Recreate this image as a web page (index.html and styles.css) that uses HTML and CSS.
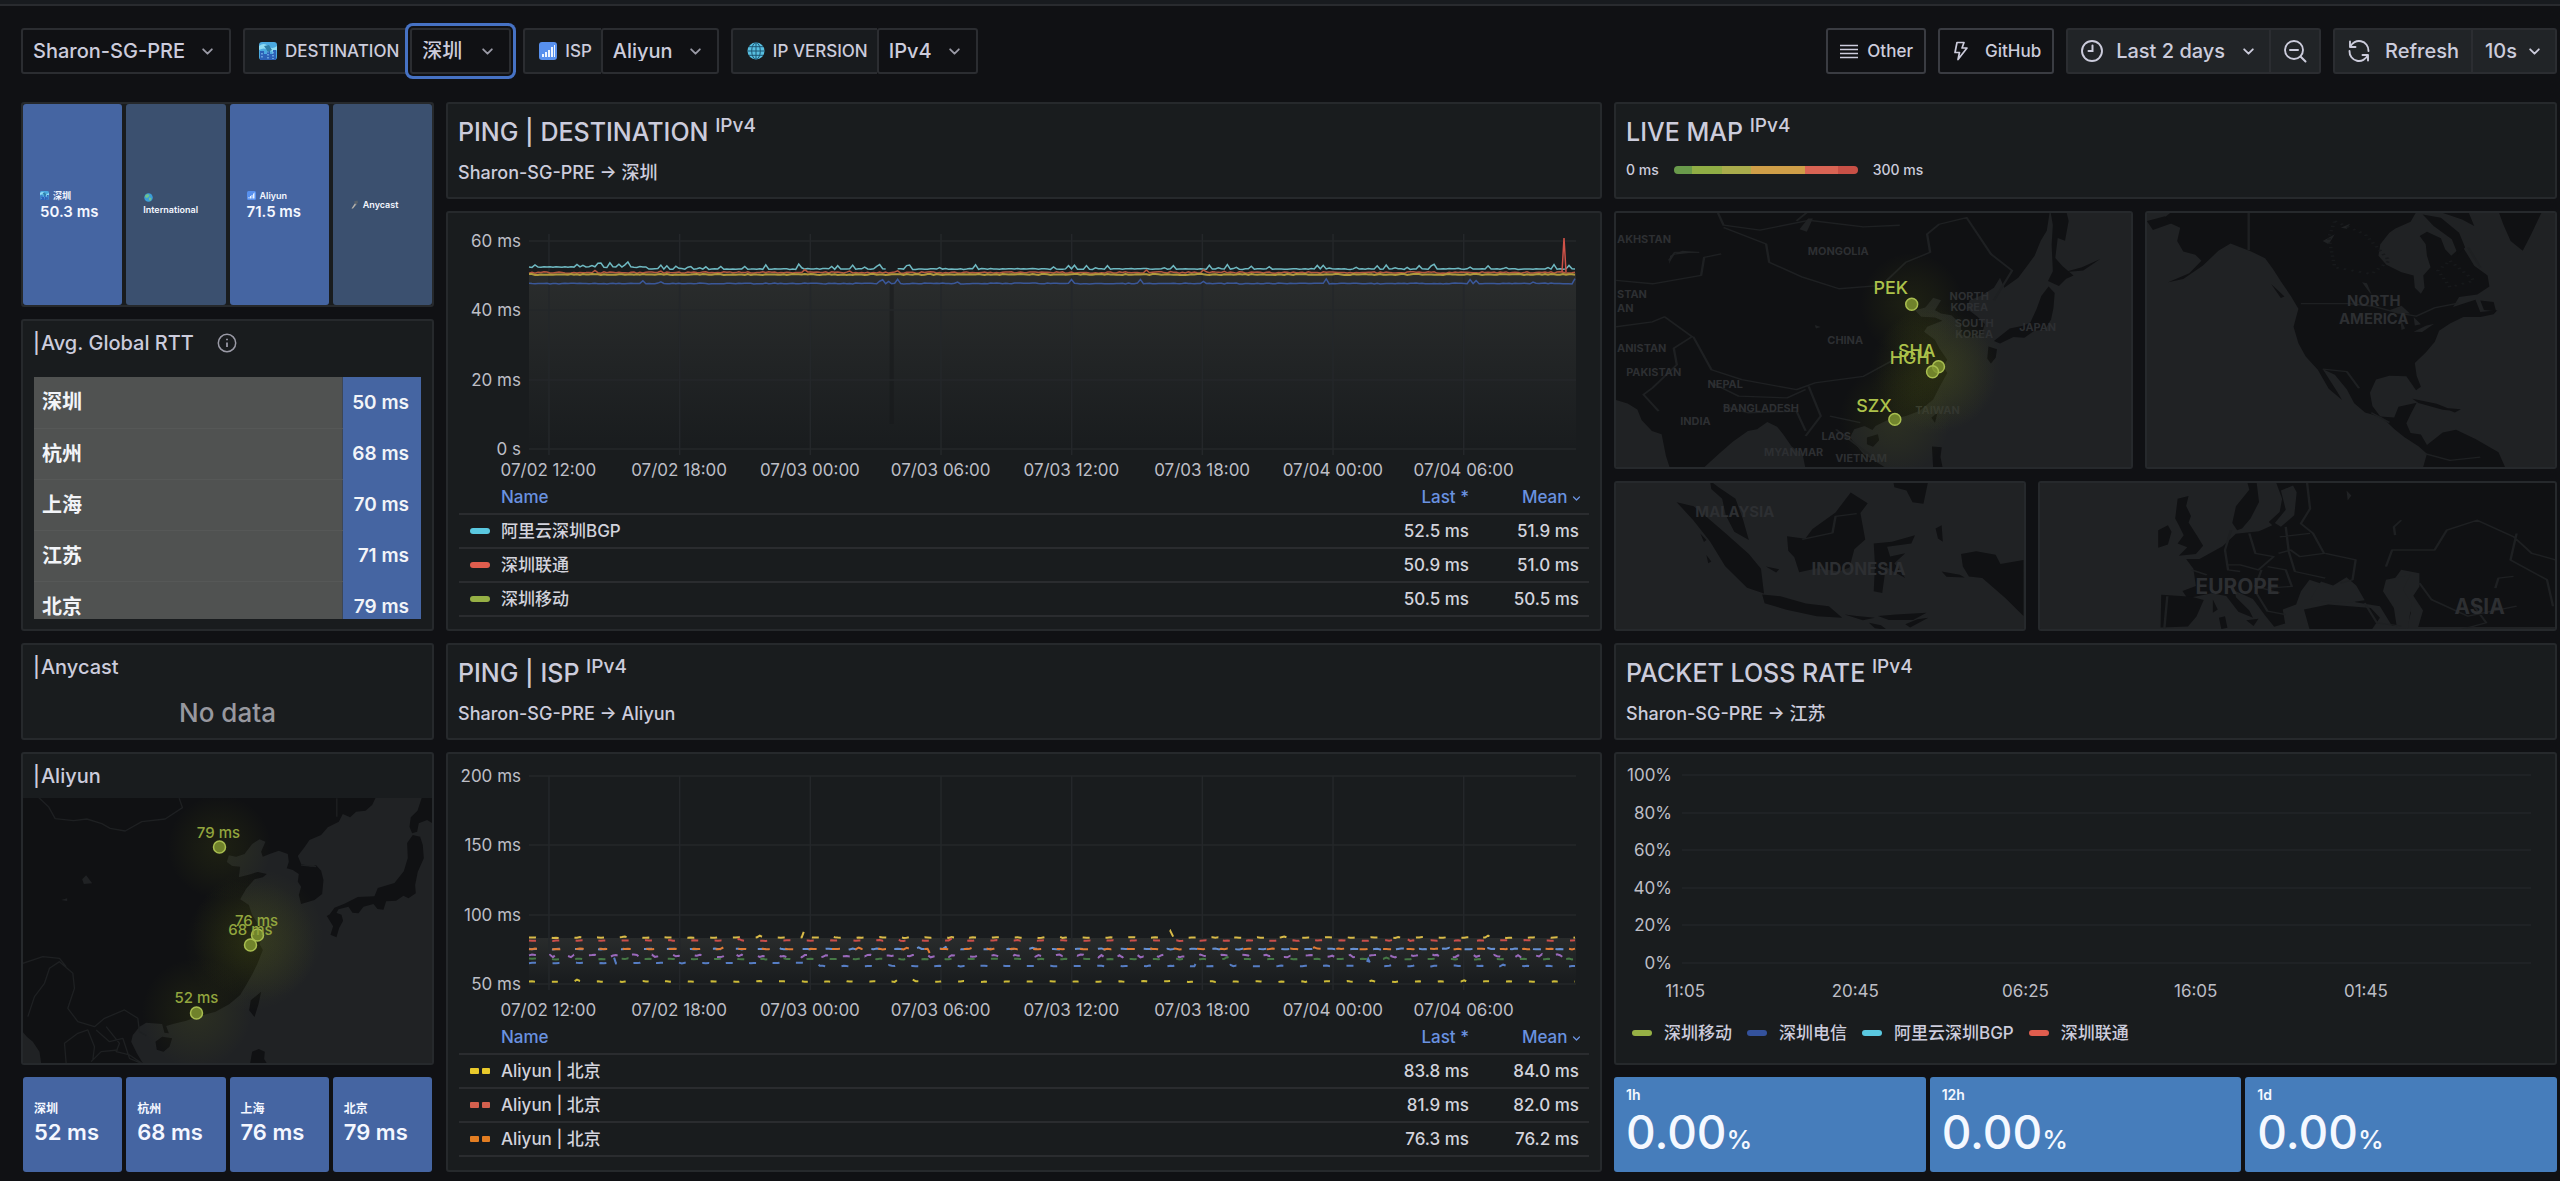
FILE: index.html
```html
<!DOCTYPE html>
<html lang="zh-CN">
<head>
<meta charset="utf-8">
<meta name="viewport" content="width=device-width, initial-scale=1">
<title>Network Latency Dashboard</title>
<link rel="stylesheet" href="styles.css">
</head>
<body>
<svg class="defs" aria-hidden="true">
  <symbol id="chevron" viewBox="0 0 12 12"><path d="M2 4l4 4 4-4" fill="none" stroke="currentColor" stroke-width="1.7" stroke-linecap="round" stroke-linejoin="round"/></symbol>
  <symbol id="bars" viewBox="0 0 18 18"><rect width="18" height="18" rx="3" fill="#5790ee"/><path d="M3 12h2v3H3zM6 10h2v5H6zM9 8h2v7H9zM12 5h2v10h-2zM15 3h1v12h-1z" fill="#eaf3ff"/></symbol>
  <symbol id="city" viewBox="0 0 18 18"><rect width="18" height="18" rx="3" fill="#4aa9e0"/><path d="M0 4q5-4 9 0t9 0v4q-5 3-9 0T0 8z" fill="#8fdcf4"/><path d="M1 18V9h4v3h3V7h3v5h3V8h3v10z" fill="#2c62b8"/><path d="M3 11v6M9 9v8M14 10v7" stroke="#8cc7f5" stroke-width="1.200" stroke-dasharray="1.500 1.500"/><path d="M5 4l5-1 3 5-4 2z" fill="#2f7fa8"/></symbol>
  <symbol id="globe" viewBox="0 0 18 18"><circle cx="9" cy="9" r="8.500" fill="#58bfe0"/><path d="M9 .5v17M.5 9h17M2 4.700h14M2 13.300h14" stroke="#1d5674" fill="none"/><ellipse cx="9" cy="9" rx="4.300" ry="8.300" fill="none" stroke="#1d5674"/></symbol>
  <symbol id="earth" viewBox="0 0 18 18"><circle cx="9" cy="9" r="8.500" fill="#3c9ed8"/><path d="M3 4l5-2 3 3-3 4-4 1-2-3zM10 9l5 1-2 6-3-2z" fill="#6fc38c"/></symbol>
  <symbol id="satellite" viewBox="0 0 18 18"><path d="M3 17L11 5l3 2L6 17z" fill="#b9b4ac"/><path d="M8 3l7-2 1 4-4 5z" fill="#58616b"/></symbol>
</svg>

<div class="topbar"></div>

<header class="toolbar">
  <div class="filters">
    <div class="field">
      <span class="pick pick-node"><select aria-label="Node"><option>Sharon-SG-PRE</option></select><svg class="chev"><use href="#chevron"/></svg></span>
    </div>
    <div class="field field-dest">
      <label for="dest"><svg class="emoji"><use href="#city"/></svg>DESTINATION</label>
      <span class="pick pick-focus"><select id="dest"><option>深圳</option></select><svg class="chev"><use href="#chevron"/></svg></span>
    </div>
    <div class="field">
      <label for="isp"><svg class="emoji"><use href="#bars"/></svg>ISP</label>
      <span class="pick"><select id="isp"><option>Aliyun</option></select><svg class="chev"><use href="#chevron"/></svg></span>
    </div>
    <div class="field">
      <label for="ipv"><svg class="emoji"><use href="#globe"/></svg>IP VERSION</label>
      <span class="pick"><select id="ipv"><option>IPv4</option></select><svg class="chev"><use href="#chevron"/></svg></span>
    </div>
  </div>
  <div class="actions">
    <button class="btn outline" type="button"><svg class="icon" viewBox="0 0 20 20"><path d="M1 4.500h18M1 8.500h18M1 12.500h18M1 16.500h18" stroke="currentColor" stroke-width="1.500"/></svg>Other</button>
    <button class="btn outline wide" type="button"><svg class="icon" viewBox="0 0 20 20"><path d="M6 1.500h7l-2 5.500h5L7 18.500l1.500-7H4z" fill="none" stroke="currentColor" stroke-width="1.700" stroke-linejoin="round"/></svg>GitHub</button>
    <div class="group">
      <button class="btn range" type="button"><svg class="icon big" viewBox="0 0 24 24"><circle cx="12" cy="12" r="10" fill="none" stroke="currentColor" stroke-width="1.900"/><path d="M12.500 6.500V12H8.500" fill="none" stroke="currentColor" stroke-width="2" stroke-linecap="round"/></svg>Last 2 days<svg class="small"><use href="#chevron"/></svg></button>
      <button class="btn zoom" type="button" aria-label="Zoom out"><svg class="icon big" viewBox="0 0 24 24"><circle cx="11" cy="11" r="9" fill="none" stroke="currentColor" stroke-width="1.900"/><path d="M7 11h8M17.500 17.500L22.500 22.500" fill="none" stroke="currentColor" stroke-width="2" stroke-linecap="round"/></svg></button>
    </div>
    <div class="group">
      <button class="btn refresh" type="button"><svg class="icon big" viewBox="0 0 24 24"><path d="M3 2.500v5.500h5.500M3.200 8A9.500 9.500 0 0 1 21.500 12M21 21.500V16h-5.500M20.800 16A9.500 9.500 0 0 1 2.500 12" fill="none" stroke="currentColor" stroke-width="1.900" stroke-linecap="round" stroke-linejoin="round"/></svg>Refresh</button>
      <button class="btn interval" type="button">10s<svg class="small"><use href="#chevron"/></svg></button>
    </div>
  </div>
</header>

<main class="board">
  <section class="col col-left">
    <div class="panel tiles">
      <div class="tile mini blue"><div><p class="cap"><svg><use href="#city"/></svg>深圳</p><p class="num">50.3 ms</p></div></div>
      <div class="tile mini slate"><div><p class="cap stack"><svg><use href="#earth"/></svg>International</p></div></div>
      <div class="tile mini blue"><div><p class="cap"><svg><use href="#bars"/></svg>Aliyun</p><p class="num">71.5 ms</p></div></div>
      <div class="tile mini slate"><div><p class="cap"><svg><use href="#satellite"/></svg>Anycast</p></div></div>
    </div>

    <div class="panel rtt">
      <h2><span>|</span> Avg. Global RTT <svg class="info" viewBox="0 0 20 20"><circle cx="10" cy="10" r="8.700" fill="none" stroke="currentColor" stroke-width="1.500"/><path d="M10 9.500v4.500M10 5.800v1.400" stroke="currentColor" stroke-width="1.800"/></svg></h2>
      <div class="clip">
        <table>
          <tbody>
            <tr><th scope="row">深圳</th><td>50 ms</td></tr>
            <tr><th scope="row">杭州</th><td>68 ms</td></tr>
            <tr><th scope="row">上海</th><td>70 ms</td></tr>
            <tr><th scope="row">江苏</th><td>71 ms</td></tr>
            <tr><th scope="row">北京</th><td>79 ms</td></tr>
          </tbody>
        </table>
      </div>
    </div>

    <div class="panel anycast">
      <h2><span>|</span> Anycast</h2>
      <p class="nodata">No data</p>
    </div>

    <div class="panel mapcard">
      <h2><span>|</span> Aliyun</h2>
      <svg class="map" viewBox="0 0 410 265" preserveAspectRatio="xMidYMid slice">
        <defs><radialGradient id="glow"><stop offset="0" stop-color="#8a9a10" stop-opacity=".11"/><stop offset=".5" stop-color="#8a9a10" stop-opacity=".06"/><stop offset="1" stop-color="#8a9a10" stop-opacity="0"/></radialGradient></defs>
        <g transform="translate(-23 -58) scale(.3333)">
          <path class="land" d="M60 170H1130L1118 195 1098 212 1070 215 1052 232 1030 222 1018 245 985 262 965 285 930 300 915 322 895 348 905 372 935 380 950 376 965 392 972 420 968 462 945 480 905 492 898 465 905 440 895 425 898 402 880 390 862 385 868 365 865 342 838 332 810 342 790 350 785 335 798 305 780 298 758 312 735 342 710 350 688 346 682 366 698 378 722 380 718 412 748 404 775 396 802 402 790 412 765 418 740 446 722 478 748 495 758 525 782 560 790 590 780 612 790 630 775 668 760 700 740 735 722 765 690 792 648 815 600 828 560 842 520 852 500 858 508 880 495 878 488 852 460 850 440 848 420 860 400 885 395 905 412 940 430 970H125L120 935 100 905 82 890 60 865z"/>
          <path class="land" d="M1268 170h40v85l-25-15-25 10-5 25-15 5-8-20 4-28 20-20zM1240 285l22 5 8 25 3 40-18 40-8 40 2 25-22 15-15-8-22 15-30 2-8 25-18-2-12-15-30 8-15 20-18-2-12-18-30 8-12 22-18-2 18-25 30-12 40-20 50-2 10-25 50-15 28-35 12-40-2-45zM982 528l22-12 22 8 5 18-12 22-8 28-18-8 8-25zM785 755l-8 38-12 38-16-20 5-30zM468 905l20-15 30 5-8 25-18 15-20-6zM758 935l20-8 18 8-2 22 8 13h-50z"/>
          <path class="lake" d="M248 418l12-12 18 24-25 2zM185 480l18-5v8z"/>
          <path class="edge" d="M115 170l32 30 20 36 55 6 40-5 45 14 25 14 45 8 50-28 70-8 52-34-10-28M1012 175v55M905 375l45 5M85 830l20-60 30-40 15-45 30-20 40 35 5 45-20 60 30 40 50 15 30-25 60-25 40 25 5 40 20 12M200 970l-5-60 40-30 30-10 20 50-5 40M290 870l40 35 40-10 20 60 35 15M70 670l60-20 50 5 20 25M320 860l40 50-10 25 40 10 45 30M275 965l30-30 50-5M260 980"/>
        </g>
        <circle cx="197" cy="49" r="52" fill="url(#glow)"/><circle cx="235" cy="137" r="66" fill="url(#glow)"/><circle cx="228" cy="147" r="66" fill="url(#glow)"/><circle cx="174" cy="215" r="55" fill="url(#glow)"/>
        <g class="pins"><circle cx="197" cy="49" r="6"/><circle cx="235" cy="137" r="6"/><circle cx="228" cy="147" r="6"/><circle cx="174" cy="215" r="6"/></g>
        <g class="pintext small"><text x="196" y="40">79 ms</text><text x="234" y="128">76 ms</text><text x="228" y="137">68 ms</text><text x="174" y="205">52 ms</text></g>
      </svg>
    </div>

    <div class="tiles foot">
      <div class="tile city blue"><p class="cap">深圳</p><p class="num">52 ms</p></div>
      <div class="tile city blue"><p class="cap">杭州</p><p class="num">68 ms</p></div>
      <div class="tile city blue"><p class="cap">上海</p><p class="num">76 ms</p></div>
      <div class="tile city blue"><p class="cap">北京</p><p class="num">79 ms</p></div>
    </div>
  </section>

  <section class="col col-mid">
    <div class="panel head"><h1>PING | DESTINATION <sup>IPv4</sup></h1><p>Sharon-SG-PRE → 深圳</p></div>

    <div class="panel chart">
      <div class="plot tall">
        <div class="yaxis"><span>60 ms</span><span>40 ms</span><span>20 ms</span><span>0 s</span></div>
        <svg id="chart-dest" viewBox="0 0 1048 228" preserveAspectRatio="none"></svg>
      </div>
      <div class="xaxis"><span>07/02 12:00</span><span>07/02 18:00</span><span>07/03 00:00</span><span>07/03 06:00</span><span>07/03 12:00</span><span>07/03 18:00</span><span>07/04 00:00</span><span>07/04 06:00</span></div>
      <table class="legend">
        <thead><tr><th class="key"></th><th>Name</th><th class="val">Last *</th><th class="val last">Mean <svg><use href="#chevron"/></svg></th></tr></thead>
        <tbody>
          <tr><td class="key"><i class="chip cyan"></i></td><td>阿里云深圳BGP</td><td class="val">52.5 ms</td><td class="val last">51.9 ms</td></tr>
          <tr><td class="key"><i class="chip red"></i></td><td>深圳联通</td><td class="val">50.9 ms</td><td class="val last">51.0 ms</td></tr>
          <tr><td class="key"><i class="chip green"></i></td><td>深圳移动</td><td class="val">50.5 ms</td><td class="val last">50.5 ms</td></tr>
        </tbody>
      </table>
    </div>

    <div class="panel head"><h1>PING | ISP <sup>IPv4</sup></h1><p>Sharon-SG-PRE → Aliyun</p></div>

    <div class="panel chart">
      <div class="plot short">
        <div class="yaxis"><span>200 ms</span><span>150 ms</span><span>100 ms</span><span>50 ms</span></div>
        <svg id="chart-isp" viewBox="0 0 1048 228" preserveAspectRatio="none"></svg>
      </div>
      <div class="xaxis"><span>07/02 12:00</span><span>07/02 18:00</span><span>07/03 00:00</span><span>07/03 06:00</span><span>07/03 12:00</span><span>07/03 18:00</span><span>07/04 00:00</span><span>07/04 06:00</span></div>
      <table class="legend">
        <thead><tr><th class="key"></th><th>Name</th><th class="val">Last *</th><th class="val last">Mean <svg><use href="#chevron"/></svg></th></tr></thead>
        <tbody>
          <tr><td class="key"><i class="dash yellow"></i></td><td>Aliyun | 北京</td><td class="val">83.8 ms</td><td class="val last">84.0 ms</td></tr>
          <tr><td class="key"><i class="dash coral"></i></td><td>Aliyun | 北京</td><td class="val">81.9 ms</td><td class="val last">82.0 ms</td></tr>
          <tr><td class="key"><i class="dash orange"></i></td><td>Aliyun | 北京</td><td class="val">76.3 ms</td><td class="val last">76.2 ms</td></tr>
        </tbody>
      </table>
    </div>
  </section>

  <section class="col col-right">
    <div class="panel head">
      <h1>LIVE MAP <sup>IPv4</sup></h1>
      <div class="scale"><span>0 ms</span><i></i><span>300 ms</span></div>
    </div>

    <div class="maps maps-top">
      <div class="panel">
        <svg class="map" viewBox="0 0 519 258" preserveAspectRatio="xMidYMid slice">
          <g transform="translate(-14 -11) scale(.6122 .3333)">
            <path class="land" d="M20 30H737L732 90 722 120 712 165 698 200 685 232 662 262 655 232 645 262 625 285 605 300 600 325 618 350 630 372 625 402 608 412 592 405 590 370 575 345 558 340 548 330 558 300 545 292 532 322 515 330 525 350 548 352 560 362 535 380 530 395 548 420 555 445 568 480 562 500 568 520 556 560 545 600 522 635 500 650 470 662 450 680 445 692 432 680 415 690 408 715 430 765 470 810H335L330 765 312 742 298 705 288 682 272 668 255 690 240 695 215 728 192 765 165 810H112L105 770 98 705 82 695 65 662 58 630 42 612 20 600z"/>
            <path class="land" d="M738 30h26l4 30-6 60-12-8-4 60 12 25 18 28-12 10-12 22-18-15 8-30-2-80 2-60zM735 258l10 20-2 45-4 35-10 30-18 5-16 20-18-2-22 20-10-8 26-38 22-8 12-10 10-40 8-40zM636 440l14 8-2 25-8 18-6-15zM552 640l-4 30-6-15zM436 715l18-10 2 18-10 20-10-8zM543 742l16 2-2 30 4 36h-16zM760 215l30-15 30-25-28 35z"/>
            <path class="edge" d="M190 33l10 40 60 15 80-30 90 20 60-5M200 80l70 50 5 55 55 45 60 35 70-10 40-70 40-30-5-55 20-30 45-20 40 110 35 50-30 90M23 240l60 10 80-25 5-55 28-10M23 380l60-15 20-15 45 60-30 35 5 50-40 70-15 20 25 50M150 410l30 100 50 30 90 30 30-20 80-20 60-60M175 545l50 45 80 5 30-25M200 620l40 20 80-5 15 60M340 560l20 90-25 60M375 650l50 20M385 690l50 70 30 30M340 30l-20 30M110 180l10-25 40 0"/>
            <path class="lake" d="M325 85l12 8 10-40-8 0zM350 375l10 6-8 4zM110 190l2-25 20-15 26 4-40 8z"/>
          </g>
          <g class="place tiny"><text class="start" x="1" y="31">AKHSTAN</text><text class="start" x="1" y="87">STAN</text><text class="start" x="1" y="101">AN</text><text class="start" x="1" y="141">ANISTAN</text><text x="224" y="43">MONGOLIA</text><text x="231" y="133">CHINA</text><text x="38" y="165">PAKISTAN</text><text x="110" y="177">NEPAL</text><text x="146" y="202">BANGLADESH</text><text x="80" y="215">INDIA</text><text x="222" y="230">LAOS</text><text x="179" y="246">MYANMAR</text><text x="247" y="252">VIETNAM</text><text x="356" y="89">NORTH</text><text x="356" y="100">KOREA</text><text x="361" y="116">SOUTH</text><text x="361" y="127">KOREA</text><text x="425" y="120">JAPAN</text><text x="324" y="204">TAIWAN</text></g>
          <circle cx="298" cy="93" r="52" fill="url(#glow)"/><circle cx="325" cy="156" r="64" fill="url(#glow)"/><circle cx="319" cy="161" r="64" fill="url(#glow)"/><circle cx="281" cy="209" r="56" fill="url(#glow)"/>
          <g class="pins"><circle cx="298" cy="93" r="6"/><circle cx="325" cy="156" r="6"/><circle cx="319" cy="161" r="6"/><circle cx="281" cy="209" r="6"/></g>
          <g class="pintext"><text x="277" y="83">PEK</text><text x="303" y="146">SHA</text><text x="296" y="153">HGH</text><text x="260" y="202">SZX</text></g>
        </svg>
      </div>
      <div class="panel">
        <svg class="map" viewBox="0 0 412 258" preserveAspectRatio="xMidYMid slice">
          <g transform="translate(-545 -11) scale(.6122 .3333)">
            <path class="land" d="M932 30H1335L1325 62 1300 82 1290 95 1275 130 1272 165 1285 192 1310 215 1330 225 1332 262 1342 280 1348 262 1346 225 1358 200 1352 165 1350 130 1340 105 1352 92 1375 112 1382 145 1392 165 1410 135 1420 165 1430 195 1452 225 1455 258 1435 282 1405 290 1395 320 1432 298 1440 335 1468 330 1462 342 1440 350 1412 350 1390 370 1372 392 1365 425 1350 458 1332 490 1335 528 1342 562 1334 572 1318 530 1290 528 1268 540 1258 580 1262 620 1275 652 1298 655 1305 622 1335 610 1325 645 1318 672 1325 702 1342 706 1352 738 1378 700 1400 692 1432 720 1470 760 1482 810H1345L1352 765 1338 742 1315 715 1298 690 1278 655 1250 640 1232 612 1220 570 1200 525 1180 508 1205 580 1212 602 1190 568 1172 510 1152 470 1140 430 1132 380 1140 325 1128 288 1112 245 1098 205 1085 172 1062 152 1028 128 1008 150 982 195 950 235 925 245 960 218 980 180 970 162 950 152 940 120 945 80 915 55z"/>
            <path class="land" d="M1470 30h72l-18 70-14 50-20-30-12-50zM1345 40l30 10 30 45 10 45-12 20-10-45-30-40zM1370 30h50l10 45-20-20zM1328 598l40 15 30 22-20-4-40-20zM1378 625l30 5-10 10zM1095 250l22 38-6 5zM890 60l30-15 10 22-30 20zM1440 300l22 5 4 28-20-4z"/>
            <path class="edge" d="M1058 30v118M1144 310h80l40 8 40 20 30 10 30-25 40-15M1180 508l40 8 20 50M1420 140l20 60M1350 765l40 20 50-10M1260 640l30 30"/>
            <path class="lake" d="M1180 120l20-20-10 30zM1245 245l12 30 4 8-8-35zM1290 330l20-14 14 24-20 0zM1308 355l8 30-6 5zM1330 350l12 22-10 4zM1330 395l20-18 14-6-20 25zM1210 80l15-12-5 15z"/>
            <path class="speckle" d="M1200 60l50 40 40 80-30 40-60-20-10-90zM1390 180l40 60-40 20-20-50z"/>
          </g>
          <g class="place mid"><text x="229" y="95">NORTH</text><text x="229" y="113">AMERICA</text></g>
        </svg>
      </div>
    </div>

    <div class="maps maps-bottom">
      <div class="panel">
        <svg class="map" viewBox="0 0 412 150" preserveAspectRatio="xMidYMid slice">
          <g transform="translate(-14 -281) scale(.6122 .3333)">
            <path class="land" d="M123 905l28 12 18 28 35 55 38 62 20 45 5 75-28-18-36-65-25-75-28-65zM178 840l14 20 28 35 12 60 10 65-24-25-14-50-6-50-18-30zM264 1185l30 5 42 22 38 8 22 35-42-4-50-20-36-20zM305 1008l30 8 12-30 38-50 25-60 28 32-12 30 8 80-18 30-8 55-18 12-35-10-30 12-8-45-10-20zM448 1030l30-5 38-20-6 25-40 10 5 30 25-10-18 30 18 45-20-20-12-15-6 80-14-5 2-80zM592 1062l25-8 32 10 8 28 38-12v170l-30-55-38-60-22-5-10-30zM480 840h58l-8 70-18-5-10-35-20-10zM550 985l10-10 2 50-8-10zM400 1245l20 5 30 5-20 8zM455 1250l30-5 50-5-22 22-40 0zM500 1275l20-15 18-5-30 30zM560 1115l30 10 8 8-30-2zM440 1270l20 8 10 14-20-5zM162 1000l10 20-4 6zM172 1065l8 20-5 5zM270 1100l22 8-5 10z"/>
            <path class="edge" d="M330 1018l50-20 5-50 35-8"/>
          </g>
          <g class="place mid"><text x="120" y="36">MALAYSIA</text></g>
          <g class="place mid-plus"><text x="245" y="94">INDONESIA</text></g>
        </svg>
      </div>
      <div class="panel">
        <svg class="map" viewBox="0 0 519 150" preserveAspectRatio="xMidYMid slice">
          <g transform="translate(-438 -281) scale(.6122 .3333)">
            <path class="land" d="M1008 840h48l4 28-22 50-6 50 8 22 8-5 14-30 14-50-4-60h32l10 50-4 40-18 30 6 10-22 18-38 8-22 38-38 38-22 0 12 30 4 52-22 15 8 22 40-15 24 8 20 48 24 18-6-22-22-40-2-20 30 25 20 50 15 34 18-10-4-42 22-15 8-40 14-35 30 18 22 10 24 40 40 12 20 60h25l6-40-30-95 14-35 30 10 0 40-10 28 16 45-8 50H1570V840z"/>
            <path class="land" d="M942 895l18-8-4 30 8 30-4 20 14 40 10 30-12 25-28 5 14-25-16-12 10-25-8-30-6-20zM910 990l16-15 6 20-6 38-16 10zM915 1185l50 6 20 10-12 50-14 30-45 3zM1150 1230l40-15 70 10 15 30-15 40h-100zM1000 1200l8 30-8 10zM1010 1255l10-5 4 35-10 4zM1055 1262l20-4-8 22z"/>
            <path class="sea" d="M1112 870l20-15 6 20-4 70-22 35-10-12 18-40zM1160 1200l18-55 20 12 22-25 16 25 14 45-30 8-40-5zM1285 1140l40-15-12 45 14 40-6 80-18-5-5-60-18-50zM1220 870l8 15-6 15z"/>
            <path class="edge" d="M1155 845l5 80-15 45 20 30 18 60-40 10-15-20-20 10M1060 1000l10 60 30 10-25 40-30-15-20 0M1030 990l-10 60 5 60 20 5M1120 980l5 75 10 60 50 20M1185 1060l50 20-5 60-20 10M1090 1100l30 10 10 50-40 5M965 1110l25 15M1160 1000l-50 10M1285 1100l10-50 70 0 20-60 50-30 60 50 30 50 40 20M1500 1000l-10 80 60 60 10 80M1340 1150l20 50 60 50 80-30M1250 1210l20 60 40 10M1430 1220l20 50-40 20M1070 1175l20 60 30 10M1080 1110l-10 50 40 20M1310 960l-12 20 2 25M1465 1165l5-30 25-5M925 1190l-5 100"/>
          </g>
          <g class="place big"><text x="199" y="113">EUROPE</text><text x="443" y="133">ASIA</text></g>
        </svg>
      </div>
    </div>

    <div class="panel head"><h1>PACKET LOSS RATE <sup>IPv4</sup></h1><p>Sharon-SG-PRE → 江苏</p></div>

    <div class="panel loss">
      <div class="rows">
        <p><span>100%</span></p><p><span>80%</span></p><p><span>60%</span></p><p><span>40%</span></p><p><span>20%</span></p><p><span>0%</span></p>
      </div>
      <div class="times"><span>11:05</span><span>20:45</span><span>06:25</span><span>16:05</span><span>01:45</span></div>
      <ul class="keys">
        <li><i class="chip green"></i>深圳移动</li><li><i class="chip navy"></i>深圳电信</li><li><i class="chip cyan"></i>阿里云深圳BGP</li><li><i class="chip red"></i>深圳联通</li>
      </ul>
    </div>

    <div class="rates">
      <div class="rate"><p>1h</p><strong>0.00<small>%</small></strong></div>
      <div class="rate"><p>12h</p><strong>0.00<small>%</small></strong></div>
      <div class="rate"><p>1d</p><strong>0.00<small>%</small></strong></div>
    </div>
  </section>
</main>
<script src="charts.js"></script>
</body>
</html>
```

FILE: styles.css
```css
* { box-sizing: border-box; }

body {
  margin: 0;
  background: #101114;
  color: #ccccdc;
  font-family: Inter, "Noto Sans CJK SC", sans-serif;
  font-size: 17px;
  line-height: 20px;
  font-weight: 500;
}

h1, h2, p, ul { margin: 0; padding: 0; }
button, select { font: inherit; color: inherit; }
table { border-collapse: collapse; width: 100%; }
.defs { position: absolute; width: 0; height: 0; }

.topbar { height: 6px; background: #181b1f; border-bottom: 2px solid #292b2f; }

/* toolbar */
.toolbar {
  display: flex;
  justify-content: space-between;
  gap: 12px;
  padding: 22px 3px 28px 21px;
}
.filters, .actions { display: flex; gap: 12px; }
.field, .group { display: flex; height: 46px; }
.field label {
  display: flex;
  align-items: center;
  gap: 8px;
  padding: 0 9px 0 14px;
  background: #181b1e;
  border: 2px solid #2b2d31;
  border-right: 0;
  border-radius: 3px 0 0 3px;
}
.emoji { width: 18px; height: 18px; }
.pick { position: relative; display: flex; }
.pick select {
  appearance: none;
  height: 46px;
  padding: 0 44px 0 10px;
  background: #101114;
  border: 2px solid #2b2d31;
  border-radius: 3px;
  outline: 0;
  font-size: 20px;
}
.chev { position: absolute; right: 17px; top: 17px; width: 13px; height: 13px; color: #9a9aa6; pointer-events: none; }
.pick-focus select { padding-right: 47px; box-shadow: 0 0 0 2px #101114, 0 0 0 5px #4672c4; }
.field-dest label { padding-right: 11px; }

.btn {
  display: flex;
  align-items: center;
  height: 46px;
  padding: 0 11px;
  border: 2px solid #2b2d31;
  background: #212427;
  gap: 8px;
}
.btn.outline { background: #101114; border-color: #3a3c42; border-radius: 3px; }
.btn.wide { gap: 14px; }
.icon { width: 20px; height: 20px; }
.icon.big { width: 24px; height: 24px; }
.small { width: 13px; height: 13px; }
.range, .refresh, .interval { font-size: 20px; }
.range { gap: 12px; padding: 0 14px 0 12px; border-radius: 3px 0 0 3px; }
.range .small { margin-left: 5px; }
.zoom, .interval { border-left-width: 0; border-radius: 0 3px 3px 0; }
.zoom { padding: 0 12px; }
.refresh { gap: 14px; padding: 0 12px; border-radius: 3px 0 0 3px; }
.interval { gap: 11px; padding: 0 14px 0 12px; }

/* board */
.board {
  display: grid;
  grid-template-columns: 413fr 1156fr 943fr;
  gap: 12px;
  padding: 0 3px 10px 21px;
}
.col { display: grid; gap: 12px; min-width: 0; }
.col-left { grid-template-rows: 205px 312px 97px 313px 95px; }
.col-mid { grid-template-rows: 97px 420px 97px 420px; }
.col-right { grid-template-rows: 97px 258px 150px 97px 313px 95px; }
.panel {
  background: #191c1e;
  border: 2px solid #26292c;
  border-radius: 3px;
  overflow: hidden;
  min-width: 0;
}

.head { padding: 14px 10px 0; }
h1 { font-size: 25px; line-height: 28px; font-weight: 500; }
h1 sup { font-size: 19px; line-height: 0; vertical-align: 9px; }
.head p { margin-top: 15px; font-size: 18px; line-height: 24px; }

h2 { display: flex; align-items: center; font-size: 20px; line-height: 24px; font-weight: 500; padding: 10px 10px 0; }
h2 span { margin-right: 1px; }

/* stat tiles */
.tiles { display: grid; grid-template-columns: repeat(4, 1fr); gap: 4px; }
.tiles.foot { padding: 0 2px; }
.tile { display: flex; border-radius: 3px; color: #f4f7ff; }
.tile.blue { background: #4565a2; }
.tile.slate { background: #3b506f; }
.tile.mini { align-items: center; padding-left: 17px; }
.mini .cap { display: flex; align-items: center; gap: 4px; font-size: 9px; line-height: 14px; font-weight: 600; }
.mini .cap svg { width: 9px; height: 9px; }
.mini .cap.stack { display: block; }
.mini .cap.stack svg { display: block; margin: 0 0 1px 1px; }
.mini .num { font-size: 15px; line-height: 18px; font-weight: 600; }
.tile.city { flex-direction: column; justify-content: center; padding: 0 0 4px 11px; }
.city .cap { font-size: 12px; line-height: 18px; font-weight: 700; }
.city .num { font-size: 22px; line-height: 28px; font-weight: 600; }

/* round trip table */
.rtt { display: flex; flex-direction: column; }
.info { width: 20px; height: 20px; margin-left: 23px; color: #9a9aa6; }
.clip { margin: 22px 11px 0; height: 242px; overflow: hidden; }
.clip tr { height: 51px; }
.clip th, .clip td { padding: 0 8px; font-size: 20px; font-weight: 600; color: #f2f4f8; }
.clip th { text-align: left; background: #505251; border-bottom: 1px solid #565857; }
.clip td { width: 79px; text-align: right; padding-right: 12px; background: #4565a2; border-left: 1px solid #3d4654; font-size: 19px; white-space: nowrap; }
.nodata { margin-top: 19px; text-align: center; font-size: 26px; line-height: 30px; color: #97989f; }

/* maps */
.mapcard { display: flex; flex-direction: column; gap: 10px; }
.map { display: block; width: 100%; height: 100%; min-height: 0; background: #202224; }
.land { fill: #101113; }
.lake, .sea { fill: #202224; }
.edge { fill: none; stroke: #1e2022; stroke-width: 4; stroke-linejoin: round; }
.speckle { fill: none; stroke: #17191b; stroke-width: 6; stroke-dasharray: 4 9; }
.pins circle { fill: #7f9430; fill-opacity: .85; stroke: #a9be50; stroke-width: 1.500; }
.pintext { fill: #adc24a; font-size: 18px; text-anchor: middle; }
.pintext.small { width: auto; font-size: 15px; fill: #92a53e; }
.place { fill: #2d2f32; text-anchor: middle; font-weight: 700; }
.place.tiny { font-size: 11px; }
.place.mid { font-size: 15px; }
.place.mid-plus { font-size: 17px; }
.place.big { font-size: 21px; }
.place .start { text-anchor: start; }
.maps { display: grid; gap: 12px; }
.maps-top { grid-template-columns: 519fr 412fr; }
.maps-bottom { grid-template-columns: 412fr 519fr; }
.scale { display: flex; align-items: center; gap: 15px; margin-top: 14px; font-size: 14px; }
.scale i {
  width: 184px;
  height: 8px;
  border-radius: 4px;
  background: linear-gradient(90deg, #699a4b 0 10%, #90ad45 10% 26%, #a9ac4c 26% 42%, #cf9e48 42% 71%, #d96454 71% 89%, #c85046 89%);
}

/* time series */
.chart { display: flex; flex-direction: column; color: #bdbec6; }
.plot { display: flex; gap: 8px; padding-right: 24px; }
.plot.tall { margin-top: 18px; margin-bottom: 1px; }
.plot.short { margin-top: 12px; margin-bottom: 6px; }
.plot svg { flex: 1; min-width: 0; height: 228px; overflow: visible; }
.yaxis { width: 73px; display: flex; flex-direction: column; justify-content: space-between; text-align: right; font-weight: 400; }
.xaxis { display: grid; grid-template-columns: repeat(8, 1fr); padding: 0 71px 0 35px; text-align: center; font-weight: 400; white-space: nowrap; }
.grid { stroke: #24272a; stroke-width: 1.500; }
.legend { width: auto; margin: 1px 11px 0; table-layout: fixed; color: #d2d3dc; }
.legend tr { height: 34px; border-bottom: 2px solid #2a2c2f; }
.legend thead tr { height: 33px; }
.legend th { color: #6a92e0; text-align: left; font-weight: 500; }
.legend th, .legend td { padding: 0; }
.legend .key { width: 42px; padding-left: 11px; }
.legend .val { width: 110px; text-align: right; }
.legend .val.last { width: 120px; padding-right: 10px; }
.legend th.val.last { padding-right: 8px; }
.legend th svg { width: 9px; height: 9px; }
.chip { display: block; width: 20px; height: 6px; border-radius: 3px; }
.dash { display: flex; gap: 3px; width: 20px; height: 6px; }
.dash::before, .dash::after { content: ""; flex: 1; background: currentColor; border-radius: 1px; }
.cyan { background: #5ac8e0; }
.red { background: #e05d4e; }
.green { background: #96b045; }
.navy { background: #34529c; }
.yellow { color: #e8c92b; }
.coral { color: #d3604e; }
.orange { color: #e27d22; }

/* packet loss */
.loss { padding: 11px 24px 0 11px; color: #bdbec6; }
.rows { display: flex; flex-direction: column; justify-content: space-between; height: 208px; font-weight: 400; }
.rows p { display: flex; align-items: center; gap: 10px; }
.rows p::after { content: ""; flex: 1; height: 2px; background: #1f2225; }
.rows span { width: 45px; text-align: right; }
.times { display: grid; grid-template-columns: repeat(5, 1fr); margin: 8px 80px 0 -27px; text-align: center; font-weight: 400; }
.keys { display: flex; gap: 15px; margin: 22px 0 0 5px; list-style: none; }
.keys li { display: flex; align-items: center; gap: 12px; color: #ccccdc; }

.rates { display: grid; grid-template-columns: repeat(3, 1fr); gap: 4px; }
.rate { padding: 8px 12px 0; background: #467dbb; border-radius: 3px; color: #f4f8ff; }
.rate p { font-size: 14px; font-weight: 600; }
.rate strong { display: block; margin-top: 3px; font-size: 46px; line-height: 48px; font-weight: 500; }
.rate small { font-size: 26px; }
```

FILE: charts.js
```js
(function () {
  var NS = "http://www.w3.org/2000/svg";
  var W = 1048;

  // Repeatable noise, so the sample series keep their shape between loads.
  function noise(seed) {
    var s = seed;
    return function () {
      s = (s * 16807) % 2147483647;
      return s / 2147483647;
    };
  }

  function add(parent, tag, attrs) {
    var el = document.createElementNS(NS, tag);
    for (var k in attrs) el.setAttribute(k, attrs[k]);
    parent.appendChild(el);
    return el;
  }

  function grid(svg, rows, top, bottom) {
    rows.forEach(function (y) {
      add(svg, "path", { d: "M0 " + y + "H" + W, "class": "grid" });
    });
    for (var i = 0; i < 8; i++) {
      var x = 20 + i * 130.800;
      add(svg, "path", { d: "M" + x + " " + top + "V" + bottom, "class": "grid" });
    }
  }

  function series(svg, o) {
    var rnd = noise(o.seed), pts = [];
    for (var x = 0; x <= W; x += 3) {
      if (o.gap && x > 358 && x < 367) { pts.push(null); continue; }
      var y = typeof o.y === "function" ? o.y(x) : o.y;
      var r = rnd();
      y -= r > o.rare ? rnd() * o.peak : (rnd() - 0.5) * o.jitter;
      (o.spikes || []).forEach(function (s) {
        if (Math.abs(s[0] - x) < 2) y = s[1];
      });
      pts.push([x, y]);
    }
    var d = "", pen = "M";
    pts.forEach(function (p) {
      if (!p) { pen = "M"; return; }
      d += pen + p[0] + " " + p[1].toFixed(1);
      pen = "L";
    });
    var attrs = { d: d, fill: "none", stroke: o.color, "stroke-width": o.width || 1.5, "vector-effect": "non-scaling-stroke" };
    if (o.dash) { attrs["stroke-dasharray"] = o.dash; attrs["stroke-dashoffset"] = o.shift || 0; }
    add(svg, "path", attrs);
  }

  function fade(svg, id, y, h, color, opacity) {
    var g = add(add(svg, "defs", {}), "linearGradient", { id: id, x1: 0, x2: 0, y1: 0, y2: 1 });
    add(g, "stop", { offset: 0, "stop-color": color, "stop-opacity": opacity });
    add(g, "stop", { offset: 1, "stop-color": color, "stop-opacity": 0 });
    add(svg, "rect", { x: 0, y: y, width: W, height: h, fill: "url(#" + id + ")" });
  }

  var dest = document.getElementById("chart-dest");
  fade(dest, "fill-dest", 42, 176, "#8a8a80", 0.15);
  add(dest, "rect", { x: 361, y: 53, width: 4, height: 140, fill: "#16181a", "fill-opacity": 0.5 });
  grid(dest, [10, 79, 149, 218], 3, 224);
  series(dest, { seed: 11, y: function (x) { return x < 118 ? 36 : 38; }, jitter: 0.8, rare: 0.8, peak: 5, color: "#6fb9c2", gap: true });
  series(dest, { seed: 23, y: 41.500, jitter: 1.5, rare: 0.97, peak: 3, color: "#b5573f" });
  series(dest, { seed: 37, y: 43.500, jitter: 1, rare: 0.99, peak: 1, color: "#b09a3c", width: 2 });
  series(dest, { seed: 51, y: 52.500, jitter: 0.8, rare: 0.95, peak: 5, color: "#3a5799" });
  add(dest, "path", { d: "M1034 41L1036 7L1038 41", fill: "none", stroke: "#cf5248", "stroke-width": 1.5 });

  var isp = document.getElementById("chart-isp");
  fade(isp, "fill-isp", 172, 44, "#8a8a80", 0.14);
  grid(isp, [10, 79, 149, 218], 10, 224);
  [
    { seed: 3, y: 171.500, color: "#d8ba48", dash: "7 15.900", spikes: [[276, 163], [642, 165]] },
    { seed: 5, y: 174.500, color: "#cb4f4b", dash: "7 16.400" },
    { seed: 7, y: 183, color: "#6690d2", dash: "8 15.100" },
    { seed: 9, y: 183, color: "#e07c36", dash: "8 15.600", spikes: [[402, 189]] },
    { seed: 13, y: 190, color: "#9a69bb", dash: "7 15.700", jitter: 3 },
    { seed: 15, y: 193, color: "#467846", dash: "7 16.300" },
    { seed: 17, y: function (x) { return x < 290 ? 197 : 200; }, color: "#567dc4", dash: "7 16.600", spikes: [[84, 188], [669, 194], [840, 193]] },
    { seed: 19, y: 215.500, color: "#cdbb38", dash: "6 17" }
  ].forEach(function (s) {
    s.jitter = s.jitter || 0.8;
    s.rare = 0.95;
    s.peak = 2;
    s.width = 2;
    series(isp, s);
  });
})();
```
